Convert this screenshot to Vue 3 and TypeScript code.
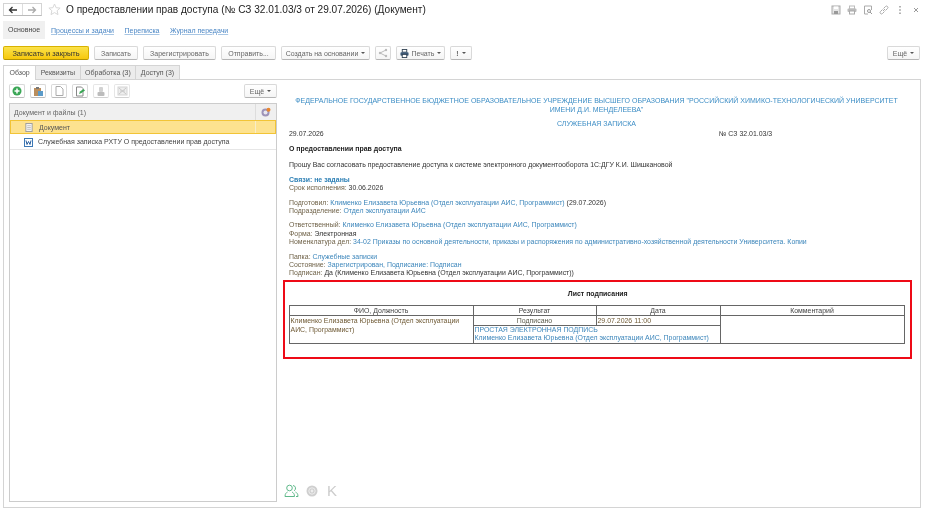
<script setup lang="ts">
const topLinks = ['Процессы и задачи', 'Переписка', 'Журнал передачи']
const formTabs = ['Реквизиты', 'Обработка (3)', 'Доступ (3)']
</script>

<template>
  <div class="page">
    <header class="title-row">
      <div class="nav-btns">
        <span class="nav-btn">
          <svg width="10" height="8" viewBox="0 0 10 8"><path d="M9 4H2M4.500 1 1.500 4l3 3" fill="none" stroke="#333" stroke-width="1.300" /></svg>
        </span>
        <span class="nav-btn">
          <svg width="10" height="8" viewBox="0 0 10 8"><path d="M1 4h7M5.500 1l3 3-3 3" fill="none" stroke="#aaa" stroke-width="1.300" /></svg>
        </span>
      </div>
      <svg class="star" width="13" height="13" viewBox="0 0 13 13">
        <path d="M6.500 1l1.600 3.700 4 .4-3 2.600.9 3.900-3.500-2-3.500 2 .9-3.900-3-2.600 4-.4z" fill="#fff" stroke="#d8d8d8" />
      </svg>
      <h1 class="title">О предоставлении прав доступа (№ СЗ 32.01.03/3 от 29.07.2026) (Документ)</h1>
      <div class="win-icons">
        <svg width="10" height="10" viewBox="0 0 10 10"><rect x="1" y="1" width="8" height="8" fill="#e6e6e6" stroke="#aaa" /><rect x="3" y="1.500" width="4" height="2.500" fill="#fff" /><rect x="3" y="6" width="4" height="3" fill="#999" /></svg>
        <svg width="10" height="10" viewBox="0 0 10 10"><rect x="2.500" y="1" width="5" height="3" fill="#fff" stroke="#bbb" /><rect x=".5" y="3.500" width="9" height="3.500" rx="1" fill="#bbb" /><rect x="2.500" y="6" width="5" height="3" fill="#fff" stroke="#aaa" /></svg>
        <svg width="10" height="10" viewBox="0 0 10 10"><path d="M8.500 5V1H1.500v8H5" fill="none" stroke="#aaa" /><circle cx="6" cy="6" r="1.500" fill="none" stroke="#999" /><path d="M7 7l2 2" stroke="#999" /></svg>
        <svg width="10" height="10" viewBox="0 0 10 10"><path d="M4 6l2-2M3.500 4.500 1.500 6.500a1.400 1.400 0 0 0 2 2l2-2M6.500 5.500l2-2a1.400 1.400 0 0 0-2-2l-2 2" fill="none" stroke="#aaa" /></svg>
        <svg width="10" height="10" viewBox="0 0 10 10"><path d="M5 1v1.500M5 4.300v1.500M5 7.500V9" stroke="#999" stroke-width="1.500" /></svg>
        <svg width="10" height="10" viewBox="0 0 10 10"><path d="M3 3l4 4M7 3 3 7" stroke="#999" /></svg>
      </div>
    </header>

    <nav class="section-row">
      <span class="section-active">Основное</span>
      <a v-for="link in topLinks" :key="link" class="section-link">{{ link }}</a>
    </nav>

    <div class="command-row">
      <button class="btn btn-primary">Записать и закрыть</button>
      <button class="btn w-save">Записать</button>
      <button class="btn w-reg">Зарегистрировать</button>
      <button class="btn w-send">Отправить...</button>
      <button class="btn w-base">Создать на основании <i class="caret"></i></button>
      <button class="btn w-share">
        <svg width="10" height="10" viewBox="0 0 10 10"><path d="M8 2 2 5l6 3" fill="none" stroke="#aaa" stroke-width=".8" /><circle cx="8" cy="2" r="1.200" fill="#bbb" /><circle cx="2" cy="5" r="1.200" fill="#bbb" /><circle cx="8" cy="8" r="1.200" fill="#bbb" /></svg>
      </button>
      <button class="btn w-print">
        <svg width="9" height="9" viewBox="0 0 10 10"><rect x="2.500" y=".5" width="5" height="3" fill="#fff" stroke="#345" /><rect x=".5" y="3.500" width="9" height="4" rx="1" fill="#3e5a78" /><rect x="2.500" y="6" width="5" height="3.500" fill="#fff" stroke="#345" /></svg>
        Печать <i class="caret"></i>
      </button>
      <button class="btn w-excl"><b>!</b> <i class="caret"></i></button>
      <button class="btn w-more push-right">Ещё <i class="caret"></i></button>
    </div>

    <div class="tabs">
      <span class="tab tab-active">Обзор</span>
      <span v-for="tab in formTabs" :key="tab" class="tab">{{ tab }}</span>
    </div>

    <main class="tab-body">
      <section class="left-col">
        <div class="tool-row">
          <span class="tool">
            <svg width="10" height="10" viewBox="0 0 10 10"><circle cx="5" cy="5" r="4.500" fill="#3aa655" /><path d="M5 2.500v5M2.500 5h5" stroke="#fff" stroke-width="1.500" /></svg>
          </span>
          <span class="tool">
            <svg width="11" height="11" viewBox="0 0 11 11"><rect x="1" y="2" width="7" height="8" fill="#b98d5c" /><rect x="3" y="1" width="3" height="2" fill="#777" /><rect x="5" y="5" width="5" height="5" fill="#5b9bc9" /></svg>
          </span>
          <span class="tool">
            <svg width="9" height="10" viewBox="0 0 9 10"><path d="M1 .5h4.500L8 3v6.500H1z" fill="#fff" stroke="#aaa" /></svg>
          </span>
          <span class="tool">
            <svg width="11" height="11" viewBox="0 0 11 11"><path d="M1.500 1h5L8 2.500V10H1.500z" fill="#fff" stroke="#888" /><path d="M4 8l1-2.500L8.500 3 10 4.500 6.500 7z" fill="#3aa655" /></svg>
          </span>
          <span class="tool tool-off">
            <svg width="10" height="11" viewBox="0 0 10 11"><rect x="3" y="1" width="4" height="5" rx="1" fill="#bbb" /><rect x="1.500" y="6" width="7" height="4" rx="1" fill="#999" /></svg>
          </span>
          <span class="tool tool-off">
            <svg width="11" height="10" viewBox="0 0 11 10"><rect x="1" y="1" width="9" height="8" fill="#e6e6e6" stroke="#bbb" /><path d="M2 2l7 6M9 2 2 8M3 5h5" stroke="#aaa" /></svg>
          </span>
          <button class="btn w-more tool-more">Ещё <i class="caret"></i></button>
        </div>

        <div class="file-list">
          <div class="list-head">
            <span>Документ и файлы (1)</span>
            <span class="list-flag">
              <svg width="10" height="10" viewBox="0 0 10 10"><circle cx="4.500" cy="5.500" r="4" fill="#9d93b8" /><circle cx="4.500" cy="5.500" r="2" fill="#e8e6ef" /><circle cx="7.500" cy="2.800" r="2" fill="#e8862e" /></svg>
            </span>
          </div>
          <div class="list-row row-selected">
            <svg class="row-icon" width="8" height="9" viewBox="0 0 8 10"><rect x=".5" y=".5" width="7" height="9" fill="#f4f4f4" stroke="#999" /><path d="M2 3h4M2 5h4M2 7h4" stroke="#bbb" /></svg>
            <span>Документ</span>
            <span class="cell-flag"></span>
          </div>
          <div class="list-row row-file">
            <svg class="row-icon row-word" width="9" height="9" viewBox="0 0 9 9"><rect x=".5" y=".5" width="8" height="8" fill="#fff" stroke="#3c78b5" /><path d="M2 2.500l1 4 1.500-3 1.500 3 1-4" fill="none" stroke="#2a5f9e" /></svg>
            <span>Служебная записка РХТУ О предоставлении прав доступа</span>
          </div>
        </div>
      </section>

      <section class="doc">
        <p class="org">
          ФЕДЕРАЛЬНОЕ ГОСУДАРСТВЕННОЕ БЮДЖЕТНОЕ ОБРАЗОВАТЕЛЬНОЕ УЧРЕЖДЕНИЕ ВЫСШЕГО ОБРАЗОВАНИЯ "РОССИЙСКИЙ ХИМИКО-ТЕХНОЛОГИЧЕСКИЙ УНИВЕРСИТЕТ<br />ИМЕНИ Д.И. МЕНДЕЛЕЕВА"
        </p>
        <p class="kind">СЛУЖЕБНАЯ ЗАПИСКА</p>
        <div class="date-row">
          <span class="doc-date">29.07.2026</span>
          <span>№ СЗ 32.01.03/3</span>
        </div>
        <p class="subject">О предоставлении прав доступа</p>
        <p class="request">Прошу Вас согласовать предоставление доступа к системе электронного документооборота 1С:ДГУ К.И. Шишкановой</p>

        <div class="group group-first">
          <div class="links-line">Связи: не заданы</div>
          <div><span class="lbl">Срок исполнения:</span> 30.06.2026</div>
        </div>
        <div class="group">
          <div><span class="lbl">Подготовил:</span> <a>Клименко Елизавета Юрьевна (Отдел эксплуатации АИС, Программист)</a> (29.07.2026)</div>
          <div><span class="lbl">Подразделение:</span> <a>Отдел эксплуатации АИС</a></div>
        </div>
        <div class="group">
          <div><span class="lbl">Ответственный:</span> <a>Клименко Елизавета Юрьевна (Отдел эксплуатации АИС, Программист)</a></div>
          <div><span class="lbl">Форма:</span> Электронная</div>
          <div><span class="lbl">Номенклатура дел:</span> <a>34-02 Приказы по основной деятельности, приказы и распоряжения по административно-хозяйственной деятельности Университета. Копии</a></div>
        </div>
        <div class="group">
          <div><span class="lbl">Папка:</span> <a>Служебные записки</a></div>
          <div><span class="lbl">Состояние:</span> <a>Зарегистрирован, Подписание: Подписан</a></div>
          <div><span class="lbl">Подписан:</span> Да (Клименко Елизавета Юрьевна (Отдел эксплуатации АИС, Программист))</div>
        </div>

        <div class="sign-box">
          <div class="sign-title">Лист подписания</div>
          <table class="sign-table">
            <colgroup>
              <col class="c1" />
              <col class="c2" />
              <col class="c3" />
              <col class="c4" />
            </colgroup>
            <tbody>
              <tr class="r-head">
                <th>ФИО, Должность</th>
                <th>Результат</th>
                <th>Дата</th>
                <th>Комментарий</th>
              </tr>
              <tr class="r-one">
                <td rowspan="2" class="who">Клименко Елизавета Юрьевна (Отдел эксплуатации АИС, Программист)</td>
                <td class="center">Подписано</td>
                <td class="who">29.07.2026 11:00</td>
                <td rowspan="2"></td>
              </tr>
              <tr>
                <td colspan="2" class="stamp">
                  <div>ПРОСТАЯ ЭЛЕКТРОННАЯ ПОДПИСЬ</div>
                  <div>Клименко Елизавета Юрьевна (Отдел эксплуатации АИС, Программист)</div>
                </td>
              </tr>
            </tbody>
          </table>
        </div>
      </section>

      <div class="foot-icons">
        <svg width="15" height="13" viewBox="0 0 15 13"><g fill="none" stroke="#5fb98a" stroke-width="1"><circle cx="5.500" cy="4" r="2.800" /><path d="M1 12.500c0-3 1.500-4 2.500-4.500M8 8c1 .5 2.500 1.500 2.500 4.500H1" /><path d="M9 1.500a2.800 2.800 0 0 1 1 5.300M11.500 8c1 .5 2.500 1.500 2.500 4.500h-2" /></g></svg>
        <svg width="12" height="12" viewBox="0 0 12 12"><circle cx="6" cy="6" r="5.500" fill="#cfcfcf" /><circle cx="6" cy="6" r="3.200" fill="none" stroke="#eee" /><circle cx="6" cy="6" r="1.400" fill="#eee" /></svg>
        <span class="foot-k">K</span>
      </div>
    </main>
  </div>
</template>

<style scoped>
.page {
  width: 925px;
  height: 512px;
  box-sizing: border-box;
  padding: 2px 5px 4px 3px;
  font-family: "Liberation Sans", Arial, sans-serif;
  font-size: 7px;
  color: #333;
  display: flex;
  flex-direction: column;
  background: #fff;
  overflow: hidden;
  filter: blur(0.35px);
}
.title-row {
  height: 15px;
  display: flex;
  align-items: center;
}
.nav-btns {
  display: flex;
  width: 39px;
  height: 13px;
  border: 1px solid #d4d4d4;
  border-bottom-color: #bbb;
  box-sizing: border-box;
}
.nav-btn {
  flex: 1;
  display: flex;
  align-items: center;
  justify-content: center;
}
.nav-btn + .nav-btn {
  border-left: 1px solid #ddd;
}
.star {
  margin-left: 6px;
}
.title {
  margin: 0 0 0 5px;
  font-size: 10.100px;
  font-weight: 400;
  color: #222;
  white-space: nowrap;
}
.win-icons {
  margin-left: auto;
  display: flex;
  gap: 6px;
  margin-right: -1px;
}
.section-row {
  margin-top: 4px;
  height: 18px;
  display: flex;
  align-items: center;
}
.section-active {
  width: 42px;
  height: 18px;
  line-height: 18px;
  text-align: center;
  background: #f0f0f0;
  color: #444;
}
.section-link {
  color: #4a86c5;
  text-decoration: underline;
  text-decoration-color: #a8c6e4;
  margin-left: 10.500px;
}
.section-link:first-of-type {
  margin-left: 6px;
}
.command-row {
  margin-top: 7px;
  height: 14px;
  display: flex;
  gap: 5px;
}
.btn {
  height: 14px;
  box-sizing: border-box;
  padding: 0;
  border: 1px solid #d9d9d9;
  border-bottom-color: #b5b5b5;
  border-radius: 2px;
  background: linear-gradient(#fff, #f5f5f5);
  font: inherit;
  color: #666;
  display: flex;
  align-items: center;
  justify-content: center;
  gap: 3px;
  white-space: nowrap;
}
.btn-primary {
  width: 86px;
  font-size: 7.400px;
  background: linear-gradient(#fbe24a, #f7c80c);
  border-color: #d8b200;
  border-bottom-color: #b59400;
  color: #333;
}
.w-save { width: 44px; }
.w-reg { width: 73px; }
.w-send { width: 55px; }
.w-base { width: 89px; }
.w-share { width: 16px; }
.w-print { width: 49px; }
.w-excl { width: 22px; }
.w-more { width: 33px; }
.push-right {
  margin-left: auto;
}
.caret {
  width: 0;
  height: 0;
  border: 2px solid transparent;
  border-top: 2px solid #555;
  border-bottom: 0;
}
.tabs {
  margin-top: 5px;
  height: 14px;
  display: flex;
}
.tab {
  border: 1px solid #d4d4d4;
  border-left: 0;
  border-bottom: 0;
  background: #ececec;
  box-sizing: border-box;
  line-height: 13px;
  padding: 0 4.500px;
  color: #555;
}
.tab-active {
  border-left: 1px solid #d4d4d4;
  padding: 0 5.500px;
  background: #fff;
  position: relative;
  z-index: 1;
  margin-bottom: -1px;
}
.tab-body {
  flex: 1;
  position: relative;
  border: 1px solid #d4d4d4;
  margin-right: -1px;
  display: flex;
  min-height: 0;
}
.left-col {
  width: 268px;
  margin: 4px 0 5px 5px;
  flex: none;
  display: flex;
  flex-direction: column;
}
.tool-row {
  height: 14px;
  display: flex;
  gap: 5px;
}
.tool {
  width: 16px;
  height: 14px;
  box-sizing: border-box;
  border: 1px solid #d9d9d9;
  border-bottom-color: #bbb;
  border-radius: 2px;
  display: flex;
  align-items: center;
  justify-content: center;
}
.tool-off {
  opacity: 0.65;
}
.tool-more {
  margin-left: auto;
}
.file-list {
  margin-top: 5px;
  flex: 1;
  border: 1px solid #ccc;
}
.list-head {
  height: 16px;
  box-sizing: border-box;
  background: #f0f0f0;
  display: flex;
  align-items: center;
  justify-content: space-between;
  padding-left: 4px;
  color: #666;
}
.list-flag {
  width: 20px;
  height: 100%;
  border-left: 1px solid #ddd;
  display: flex;
  align-items: center;
  justify-content: center;
}
.list-row {
  position: relative;
  height: 14px;
  box-sizing: border-box;
  display: flex;
  align-items: center;
  padding-left: 28px;
  color: #444;
}
.row-file {
  height: 16px;
  border-bottom: 1px solid #e6e6e6;
}
.row-selected {
  background: #fde28f;
  border: 1px solid #f2c436;
  color: #555;
}
.cell-flag {
  position: absolute;
  right: 19px;
  top: 0;
  bottom: 0;
  border-left: 1px solid #f8edc8;
}
.row-icon {
  position: absolute;
  left: 14px;
  top: 2px;
}
.row-word {
  left: 14px;
  top: 4px;
}
.doc {
  flex: 1;
  min-width: 0;
  margin-left: 2.500px;
  padding: 16px 16px 0 9.500px;
  line-height: 8.200px;
  font-size: 6.950px;
  color: #333;
}
.doc p {
  margin: 0;
}
.org,
.kind {
  text-align: center;
  font-size: 7px;
  color: #3c8dc5;
  white-space: nowrap;
}
.doc .org {
  line-height: 9px;
}
.doc .kind {
  margin-top: 5px;
  line-height: 9px;
}
.date-row {
  margin-top: 2px;
  display: flex;
}
.doc-date {
  width: 430px;
}
.doc .subject {
  margin-top: 6.500px;
  font-weight: 700;
  color: #222;
}
.doc .request {
  margin-top: 8.500px;
  white-space: nowrap;
}
.group {
  margin-top: 6.500px;
  white-space: nowrap;
}
.group-first {
  margin-top: 6px;
}
.links-line {
  color: #2f80b5;
  font-weight: 700;
}
.lbl {
  color: #6f6248;
}
.doc a {
  color: #3c86bb;
}
.sign-box {
  margin: 3px -8px 0 -6.500px;
  height: 79px;
  box-sizing: border-box;
  border: 2.500px solid #ee0a17;
  padding: 8px 3px 0 4px;
}
.sign-title {
  text-align: center;
  font-weight: 700;
  color: #222;
  height: 14.500px;
}
.sign-table {
  width: 616px;
  table-layout: fixed;
  border-collapse: collapse;
  line-height: 8.500px;
}
.c1 { width: 184px; }
.c2 { width: 123px; }
.c3 { width: 124px; }
.sign-table th,
.sign-table td {
  border: 1px solid #666;
  padding: 0 1px;
  vertical-align: top;
}
.sign-table th {
  font-weight: 400;
  height: 9px;
  line-height: 9px;
  text-align: center;
  color: #444;
}
.r-one td {
  height: 9px;
  line-height: 9px;
}
.who {
  color: #6f5a35;
}
.center {
  text-align: center;
  color: #5a5a4a;
}
.stamp {
  color: #3c86bb;
  height: 17px;
}
.foot-icons {
  position: absolute;
  left: 280px;
  top: 402px;
  display: flex;
  align-items: center;
  gap: 7px;
}
.foot-k {
  font-size: 15px;
  color: #ccc;
  margin-left: 2px;
}
</style>
